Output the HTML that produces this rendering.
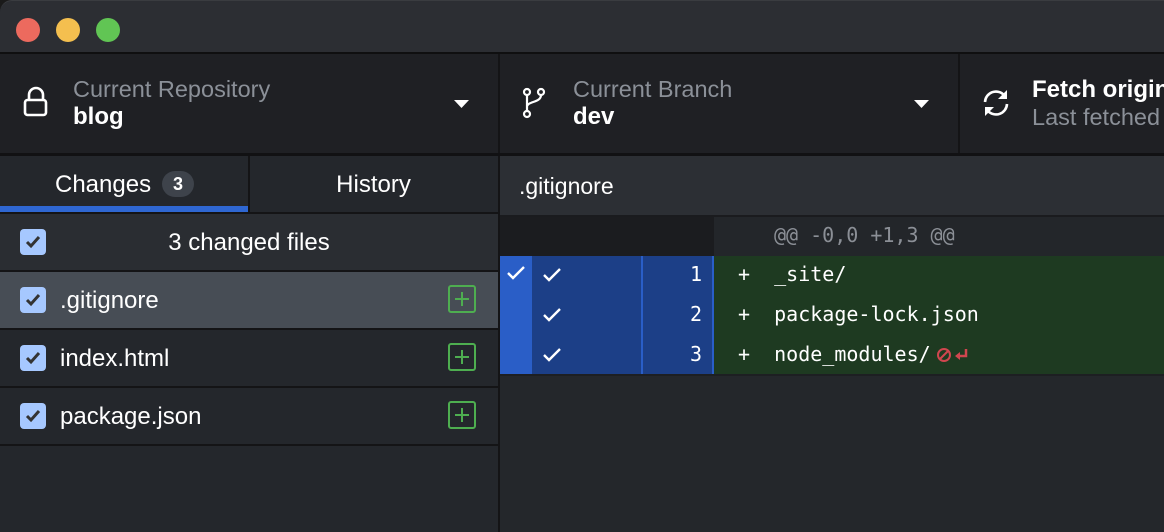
<!DOCTYPE html>
<html><head><meta charset="utf-8"><style>
*{margin:0;padding:0;box-sizing:border-box}
body{width:1164px;height:532px;overflow:hidden;background:#1a1a1a;font-family:"Liberation Sans",sans-serif;color:#fff;position:relative}
.a{position:absolute;white-space:nowrap}
.mono{font-family:"DejaVu Sans Mono","Liberation Mono",monospace;font-size:20px}
.cb{position:absolute;width:26px;height:26px;background:#a6c8ff;border-radius:4px}
.cb svg{position:absolute;left:4px;top:4px}
.plus{position:absolute;width:28px;height:28px;border:2px solid #4eae50;border-radius:3px}
.plus:before{content:"";position:absolute;left:5px;top:11px;width:14px;height:2px;background:#4eae50}
.plus:after{content:"";position:absolute;left:11px;top:5px;width:2px;height:14px;background:#4eae50}
.ft{font-size:24px}
</style></head><body>
<div class="a" style="left:0;top:0;width:1164px;height:52px;background:#2c2e33;border-top-left-radius:12px;border-top:1px solid #3a3c40"></div>
<div class="a" style="left:16px;top:18px;width:24px;height:24px;border-radius:50%;background:#ec6a5e"></div>
<div class="a" style="left:56px;top:18px;width:24px;height:24px;border-radius:50%;background:#f4bf4f"></div>
<div class="a" style="left:96px;top:18px;width:24px;height:24px;border-radius:50%;background:#61c554"></div>
<div class="a" style="left:0;top:52px;width:1164px;height:2px;background:#0f0f10"></div>
<div class="a" style="left:0;top:54px;width:1164px;height:99px;background:#1f2024"></div>
<div class="a" style="left:498px;top:54px;width:2px;height:99px;background:#141416"></div>
<div class="a" style="left:958px;top:54px;width:2px;height:99px;background:#141416"></div>
<svg class="a" style="left:22px;top:86px" width="28" height="32" viewBox="0 0 28 32"><path d="M7 14V9a7 7 0 0 1 14 0v5" fill="none" stroke="#fff" stroke-width="2.6"/><rect x="3" y="14" width="21" height="15" rx="2.5" fill="none" stroke="#fff" stroke-width="2.6"/></svg>
<div class="a" style="left:73px;top:76px;font-size:23.5px;color:#8b9098">Current Repository</div>
<div class="a" style="left:73px;top:103px;font-size:24px;font-weight:bold">blog</div>
<svg class="a" style="left:454px;top:100px" width="16" height="10"><path d="M0 0h15L7.5 8z" fill="#fff"/></svg>
<svg class="a" style="left:522px;top:87px" width="26" height="34" viewBox="0 0 26 34"><circle cx="5" cy="5" r="3" fill="none" stroke="#fff" stroke-width="2.2"/><circle cx="19" cy="5" r="3" fill="none" stroke="#fff" stroke-width="2.2"/><circle cx="5" cy="27" r="3" fill="none" stroke="#fff" stroke-width="2.2"/><path d="M5 8v16M19 8c0 8-14 6-14 12" fill="none" stroke="#fff" stroke-width="2.2"/></svg>
<div class="a" style="left:573px;top:76px;font-size:23.5px;color:#8b9098">Current Branch</div>
<div class="a" style="left:573px;top:103px;font-size:24px;font-weight:bold">dev</div>
<svg class="a" style="left:914px;top:100px" width="16" height="10"><path d="M0 0h15L7.5 8z" fill="#fff"/></svg>
<svg class="a" style="left:980px;top:88px" width="32" height="30" viewBox="0 0 32 30"><path d="M5 14a11 11 0 0 1 19-7" fill="none" stroke="#fff" stroke-width="2.6"/><path d="M27 2v9h-9z" fill="#fff"/><path d="M27 16a11 11 0 0 1-19 7" fill="none" stroke="#fff" stroke-width="2.6"/><path d="M5 28v-9h9z" fill="#fff"/></svg>
<div class="a" style="left:1032px;top:76px;font-size:24px;font-weight:bold">Fetch origin</div>
<div class="a" style="left:1032px;top:104px;font-size:23.5px;color:#8b9098">Last fetched</div>
<div class="a" style="left:0;top:153px;width:1164px;height:3px;background:#111113"></div>
<div class="a" style="left:0;top:156px;width:498px;height:376px;background:#24272c"></div>
<div class="a" style="left:248px;top:156px;width:2px;height:56px;background:#141416"></div>
<div class="a" style="left:0;top:206px;width:248px;height:6px;background:#2f67d2"></div>
<div class="a ft" style="left:55px;top:171px">Changes</div>
<div class="a" style="left:162px;top:171px;width:32px;height:26px;border-radius:13px;background:#3e434b;font-size:18px;font-weight:bold;text-align:center;line-height:26px">3</div>
<div class="a ft" style="left:249px;top:171px;width:249px;text-align:center">History</div>
<div class="a" style="left:0;top:212px;width:498px;height:2px;background:#141416"></div>
<div class="a" style="left:0;top:214px;width:498px;height:56px;background:#2a2d32"></div>
<div class="cb" style="left:20px;top:229px"><svg width="18" height="18"><path d="M3 9l4 4 8-9" fill="none" stroke="#333" stroke-width="3"/></svg></div>
<div class="a ft" style="left:0;top:229px;width:498px;text-align:center">3 changed files</div>
<div class="a" style="left:0;top:270px;width:498px;height:2px;background:#141416"></div>
<div class="a" style="left:0;top:272px;width:498px;height:56px;background:#474d55"></div>
<div class="cb" style="left:20px;top:287px"><svg width="18" height="18"><path d="M3 9l4 4 8-9" fill="none" stroke="#333" stroke-width="3"/></svg></div>
<div class="a ft" style="left:60px;top:287px">.gitignore</div>
<div class="plus" style="left:448px;top:285px"></div>
<div class="a" style="left:0;top:328px;width:498px;height:2px;background:#141416"></div>
<div class="cb" style="left:20px;top:345px"><svg width="18" height="18"><path d="M3 9l4 4 8-9" fill="none" stroke="#333" stroke-width="3"/></svg></div>
<div class="a ft" style="left:60px;top:345px">index.html</div>
<div class="plus" style="left:448px;top:343px"></div>
<div class="a" style="left:0;top:386px;width:498px;height:2px;background:#141416"></div>
<div class="cb" style="left:20px;top:403px"><svg width="18" height="18"><path d="M3 9l4 4 8-9" fill="none" stroke="#333" stroke-width="3"/></svg></div>
<div class="a ft" style="left:60px;top:403px">package.json</div>
<div class="plus" style="left:448px;top:401px"></div>
<div class="a" style="left:0;top:444px;width:498px;height:2px;background:#141416"></div>
<div class="a" style="left:498px;top:156px;width:2px;height:376px;background:#141416"></div>
<div class="a" style="left:500px;top:156px;width:664px;height:376px;background:#24272b"></div>
<div class="a" style="left:500px;top:156px;width:664px;height:59px;background:#2c2f34"></div>
<div class="a" style="left:519px;top:173px;font-size:23px">.gitignore</div>
<div class="a" style="left:500px;top:215px;width:664px;height:2px;background:#1a1b1e"></div>
<div class="a" style="left:500px;top:217px;width:214px;height:39px;background:#1b1c1f"></div>
<div class="a" style="left:714px;top:217px;width:450px;height:39px;background:#23262a"></div>
<div class="a mono" style="left:774px;top:223px;color:#8b8f96">@@ -0,0 +1,3 @@</div>
<div class="a" style="left:500px;top:256px;width:32px;height:118px;background:#2a5ec7"></div>
<div class="a" style="left:532px;top:256px;width:182px;height:118px;background:#1c3f87"></div>
<div class="a" style="left:641px;top:256px;width:2px;height:118px;background:#2a5ec7"></div>
<div class="a" style="left:712px;top:256px;width:2px;height:118px;background:#2a5ec7"></div>
<div class="a" style="left:714px;top:256px;width:450px;height:118px;background:#1e3a21"></div>
<div class="a" style="left:500px;top:374px;width:664px;height:2px;background:#1d1f22"></div>
<svg class="a" style="left:506px;top:265px" width="20" height="16"><path d="M2 8l5 5 11-11" fill="none" stroke="#fff" stroke-width="2.4"/></svg>
<svg class="a" style="left:542px;top:267px" width="20" height="16"><path d="M2 8l5 5 11-11" fill="none" stroke="#fff" stroke-width="2.4"/></svg>
<svg class="a" style="left:542px;top:307px" width="20" height="16"><path d="M2 8l5 5 11-11" fill="none" stroke="#fff" stroke-width="2.4"/></svg>
<svg class="a" style="left:542px;top:347px" width="20" height="16"><path d="M2 8l5 5 11-11" fill="none" stroke="#fff" stroke-width="2.4"/></svg>
<div class="a mono" style="left:676px;top:262px;width:26px;text-align:right">1</div>
<div class="a mono" style="left:676px;top:302px;width:26px;text-align:right">2</div>
<div class="a mono" style="left:676px;top:342px;width:26px;text-align:right">3</div>
<div class="a mono" style="left:738px;top:262px">+&nbsp;&nbsp;_site/</div>
<div class="a mono" style="left:738px;top:302px">+&nbsp;&nbsp;package-lock.json</div>
<div class="a mono" style="left:738px;top:342px">+&nbsp;&nbsp;node_modules/</div>
<svg class="a" style="left:936px;top:346px" width="36" height="18"><circle cx="8" cy="9" r="6" fill="none" stroke="#d0464f" stroke-width="2"/><path d="M4 13l8-8" stroke="#d0464f" stroke-width="2"/><path d="M30 3v7h-8" fill="none" stroke="#d0464f" stroke-width="2.5"/><path d="M19 10l5-4v8z" fill="#d0464f"/></svg>
</body></html>
